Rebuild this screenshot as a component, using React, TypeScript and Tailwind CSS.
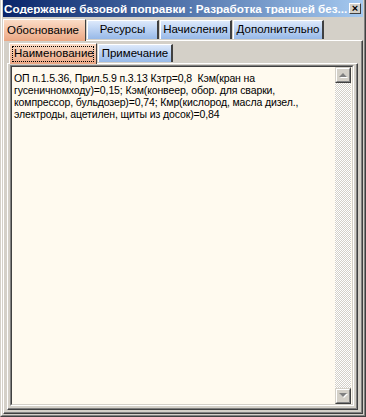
const lines = [
  'ОП п.1.5.36, Прил.5.9 п.3.13 Кзтр=0,8  Кэм(кран на',
  'гусеничномходу)=0,15; Кэм(конвеер, обор. для сварки,',
  'компрессор, бульдозер)=0,74; Кмр(кислород, масла дизел.,',
  'электроды, ацетилен, щиты из досок)=0,84',
]

function Arrow({ up }: { up?: boolean }) {
  return (
    <svg width="9" height="6" viewBox="0 0 9 6" className="block">
      {up ? (
        <>
          <polygon points="5,2 9,6 1,6" fill="#ffffff" />
          <polygon points="4,1 8,5 0,5" fill="#808080" />
        </>
      ) : (
        <>
          <polygon points="1,1 9,1 5,5" fill="#ffffff" />
          <polygon points="0,0 8,0 4,4" fill="#808080" />
        </>
      )}
    </svg>
  )
}

function ScrollButton({ up }: { up?: boolean }) {
  return (
    <div className="h-[16px] w-[16px] border border-t-[#d4d0c8] border-l-[#d4d0c8] border-r-[#404040] border-b-[#404040]">
      <div className="h-full w-full border border-t-white border-l-white border-r-[#808080] border-b-[#808080] bg-[#d4d0c8] flex items-center justify-center">
        <Arrow up={up} />
      </div>
    </div>
  )
}

export default function App() {
  return (
    <div className="w-[366px] h-[417px] bg-[#d4d0c8] text-black font-['Liberation_Sans',Arial,sans-serif] border-l border-r border-b border-l-[#d4d0c8] border-r-[#404040] border-b-[#404040]">
      <div className="h-full flex flex-col border-l border-r border-b border-l-white border-r-[#808080] border-b-[#808080] px-px pb-px">
        {/* Title bar */}
        <div className="h-[17px] shrink-0 flex items-center gap-[2px] bg-gradient-to-r from-[#0a246a] to-[#a6caf0] pl-[1px] pr-[2px]">
          <span className="flex-1 min-w-0 overflow-hidden whitespace-nowrap text-white font-bold text-[11.7px] leading-none">
            Содержание базовой поправки : Разработка траншей без...
          </span>
          <div className="w-[12px] h-[11px] shrink-0 border border-t-white border-l-white border-r-[#404040] border-b-[#404040] bg-[#d4d0c8] flex items-center justify-center text-[11px] leading-none font-bold">
            ×
          </div>
        </div>

        {/* Top tabs */}
        <div className="h-[23px] shrink-0 flex items-end text-[11.5px] leading-none">
          <div className="w-[83px] h-[22px] -mb-px relative z-10 flex items-center pl-[3px] border-l border-t border-r border-l-white border-t-white border-r-[#404040] bg-gradient-to-b from-[#fbdcc6] to-[#eba784]">
            Обоснование
          </div>
          <div className="w-[72px] h-[19px] mb-[1px] ml-px flex items-center justify-center border-l border-t border-r-2 border-l-white border-t-white border-r-[#404040] bg-gradient-to-b from-[#dde9fb] to-[#97b9e8]">
            Ресурсы
          </div>
          <div className="w-[72px] h-[19px] mb-[1px] ml-px flex items-center justify-center border-l border-t border-r-2 border-l-white border-t-white border-r-[#404040] bg-gradient-to-b from-[#dde9fb] to-[#97b9e8]">
            Начисления
          </div>
          <div className="w-[91px] h-[19px] mb-[1px] ml-px flex items-center justify-center border-l border-t border-r-2 border-l-white border-t-white border-r-[#404040] bg-gradient-to-b from-[#dde9fb] to-[#97b9e8]">
            Дополнительно
          </div>
        </div>

        {/* Tab panel */}
        <div className="flex-1 flex flex-col border border-t-white border-l-white border-r-[#404040] border-b-[#404040]">
          <div className="flex-1 flex flex-col border-r border-b border-r-[#808080] border-b-[#808080] px-[3px] pb-[2px]">
            {/* Sub tabs */}
            <div className="h-[22px] shrink-0 flex items-end text-[11.5px] leading-none pl-[2px]">
              <div className="w-[88px] h-[21px] -mb-px relative z-10 p-[2px] border-l border-t border-r border-l-white border-t-white border-r-[#404040] bg-gradient-to-b from-[#fbdcc6] to-[#eba784]">
                <div className="h-full flex items-center pl-[1px] border border-dotted border-black">
                  Наименование
                </div>
              </div>
              <div className="w-[75px] h-[18px] mb-[1px] ml-px flex items-center justify-center border-l border-t border-r-2 border-l-white border-t-white border-r-[#404040] bg-gradient-to-b from-[#dde9fb] to-[#97b9e8]">
                Примечание
              </div>
            </div>

            {/* Inner panel */}
            <div className="flex-1 flex flex-col border border-t-white border-l-white border-r-[#404040] border-b-[#404040]">
              <div className="flex-1 flex flex-col border-r border-b border-r-[#808080] border-b-[#808080] px-[2px] pt-[1px] pb-[2px]">
                {/* Memo */}
                <div className="flex-1 flex border border-t-[#808080] border-l-[#808080] border-r-white border-b-white">
                  <div className="flex-1 flex border border-t-[#404040] border-l-[#404040] border-r-[#d4d0c8] border-b-[#d4d0c8] bg-[#fffaef]">
                    <div className="flex-1 pl-[2px] pt-[5px] text-[10.5px] tracking-[-0.12px] leading-[12px] whitespace-nowrap overflow-hidden">
                      {lines.map((l) => (
                        <div key={l} className="whitespace-pre">
                          {l}
                        </div>
                      ))}
                    </div>
                    <div className="w-[16px] flex flex-col mr-px">
                      <ScrollButton up />
                      <div className="flex-1 bg-[repeating-conic-gradient(#d4d0c8_0%_25%,#ffffff_0%_50%)] bg-[length:2px_2px]" />
                      <ScrollButton />
                    </div>
                  </div>
                </div>
              </div>
            </div>
          </div>
        </div>
      </div>
    </div>
  )
}
